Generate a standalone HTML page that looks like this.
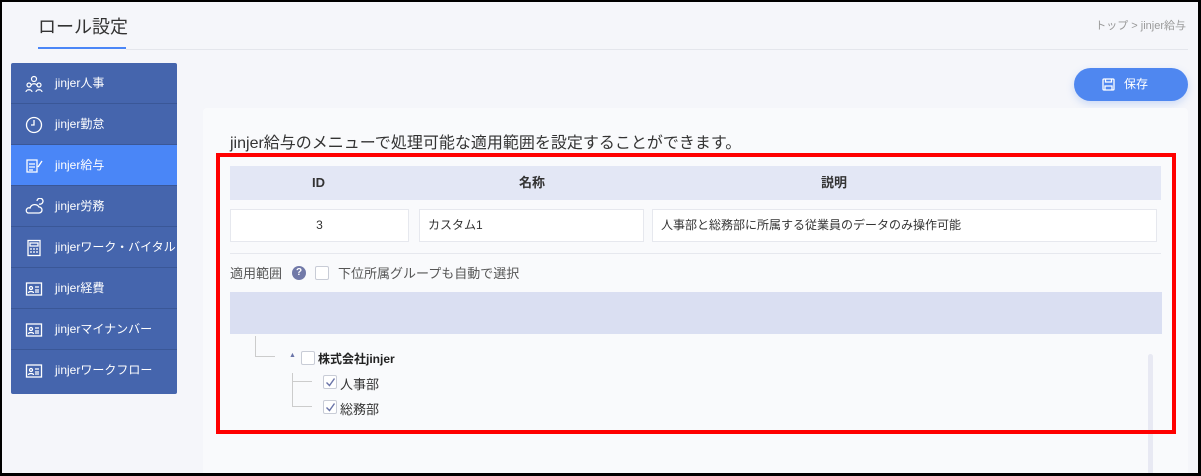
<!DOCTYPE html>
<html><head><meta charset="utf-8"><style>
*{box-sizing:border-box;margin:0;padding:0}
body{width:1201px;height:476px;overflow:hidden;background:#000;font-family:"Liberation Sans","Noto Sans CJK JP",sans-serif;color:#333}
#f{position:absolute;left:2px;top:2px;width:1196px;height:471px;background:#f5f6fa;overflow:hidden}
.a{position:absolute}
.side{left:9px;top:61px;width:166px;height:331px;background:#4565ad;border-radius:2px}
.it{position:absolute;left:0;width:166px;height:41px;border-bottom:1px solid #3a5797;color:#fff;font-size:12px;line-height:41px;padding-left:44px;white-space:nowrap}
.it svg{position:absolute;left:14px;top:12px}
.act{background:#4a86f7}
.cell{position:absolute;top:207px;height:33px;background:#fff;border:1px solid #e6e8ee;font-size:12px;line-height:31px}
.cb{position:absolute;width:14px;height:14px;border:1px solid #c8ccd6;background:#fff;border-radius:2px}
.ck{position:absolute;left:1px;top:1px}
</style></head><body><div id="f">
<div class="a" style="left:36px;top:11px;font-size:18px;color:#333">ロール設定</div>
<div class="a" style="left:36px;top:45px;width:88px;height:2px;background:#4a86f7"></div>
<div class="a" style="left:124px;top:47px;width:1062px;height:1px;background:#e4e6ec"></div>
<div class="a" style="right:12px;top:15px;font-size:11px;color:#999">トップ &gt; jinjer給与</div>
<div class="a side">
<div class="it" style="top:0"><svg width="18" height="18" viewBox="0 0 18 18" fill="none" stroke="#fff" stroke-width="1.2"><circle cx="9" cy="4" r="2.5"/><circle cx="4" cy="10" r="2"/><circle cx="14" cy="10" r="2"/><path d="M1 17c0-3 6-3 6 0M11 17c0-3 6-3 6 0M6 11c0-3 6-3 6 0"/></svg>jinjer人事</div>
<div class="it" style="top:41px"><svg width="18" height="18" viewBox="0 0 18 18" fill="none" stroke="#fff" stroke-width="1.3"><circle cx="9" cy="9" r="7.5"/><path d="M9 4v5H6"/></svg>jinjer勤怠</div>
<div class="it act" style="top:82px"><svg width="18" height="18" viewBox="0 0 18 18" fill="none" stroke="#fff" stroke-width="1.3"><path d="M2 3h10v12H2zM4 7h6M4 10h6M4 13h4M13 10l4-6"/></svg>jinjer給与</div>
<div class="it" style="top:123px"><svg width="20" height="18" viewBox="0 0 20 18" fill="none" stroke="#fff" stroke-width="1.3"><path d="M3 15h11a3 3 0 0 0 0-6 5 5 0 0 0-9 1 2.5 2.5 0 0 0-2 5zM14 6a3 3 0 1 0-2-3"/></svg>jinjer労務</div>
<div class="it" style="top:164px"><svg width="18" height="18" viewBox="0 0 18 18" fill="none" stroke="#fff" stroke-width="1.3"><rect x="3" y="1.5" width="12" height="15"/><path d="M5 4h8v3H5zM5 10h2M8 10h2M11 10h2M5 13h2M8 13h2M11 13h2"/></svg>jinjerワーク・バイタル</div>
<div class="it" style="top:205px"><svg width="18" height="18" viewBox="0 0 18 18" fill="none" stroke="#fff" stroke-width="1.3"><rect x="1.5" y="3" width="15" height="12"/><circle cx="6" cy="8" r="1.5"/><path d="M3.5 13c0-2 5-2 5 0M10 7h4M10 10h4M10 12h4"/></svg>jinjer経費</div>
<div class="it" style="top:246px"><svg width="18" height="18" viewBox="0 0 18 18" fill="none" stroke="#fff" stroke-width="1.3"><rect x="1.5" y="3" width="15" height="12"/><circle cx="6" cy="8" r="1.5"/><path d="M3.5 13c0-2 5-2 5 0M10 7h4M10 10h4M10 12h4"/></svg>jinjerマイナンバー</div>
<div class="it" style="top:287px;border:0"><svg width="18" height="18" viewBox="0 0 18 18" fill="none" stroke="#fff" stroke-width="1.3"><rect x="1.5" y="3" width="15" height="12"/><circle cx="6" cy="8" r="1.5"/><path d="M3.5 13c0-2 5-2 5 0M10 7h4M10 10h4M10 12h4"/></svg>jinjerワークフロー</div>
</div>
<div class="a" style="left:1072px;top:66px;width:114px;height:33px;border-radius:17px;background:#4f87f0;box-shadow:0 3px 8px rgba(79,135,240,.25);color:#fff;font-size:12px;line-height:33px;padding-left:50px">保存
<svg class="a" style="left:28px;top:10px" width="13" height="13" viewBox="0 0 13 13" fill="none" stroke="#fff" stroke-width="1.3"><rect x="1" y="1" width="11" height="11" rx="1"/><path d="M3.5 1v3h6V1M3 12V8h7v4"/></svg></div>
<div class="a" style="left:201px;top:106px;width:985px;height:370px;background:#f9fafc;border-radius:4px"></div>
<div class="a" style="left:228px;top:127px;font-size:16px;color:#333">jinjer給与のメニューで処理可能な適用範囲を設定することができます。</div>
<div class="a" style="left:228px;top:164px;width:931px;height:34px;background:#e3e7f5;font-size:13px;font-weight:bold;line-height:34px">
<span class="a" style="left:82px">ID</span><span class="a" style="left:289px">名称</span><span class="a" style="left:591px">説明</span></div>
<div class="cell" style="left:228px;width:179px;text-align:center">3</div>
<div class="cell" style="left:417px;width:225px;padding-left:8px">カスタム1</div>
<div class="cell" style="left:650px;width:505px;padding-left:8px">人事部と総務部に所属する従業員のデータのみ操作可能</div>
<div class="a" style="left:228px;top:251px;width:931px;height:1px;background:#e6e8ee"></div>
<div class="a" style="left:228px;top:261px;font-size:13px;color:#555">適用範囲</div>
<div class="a" style="left:290px;top:264px;width:14px;height:14px;border-radius:50%;background:#7179a8;color:#fff;font-size:10px;font-weight:bold;text-align:center;line-height:14px">?</div>
<div class="cb" style="left:313px;top:264px"></div>
<div class="a" style="left:336px;top:261px;font-size:13px;color:#555">下位所属グループも自動で選択</div>
<div class="a" style="left:228px;top:290px;width:932px;height:42px;background:#dadff2"></div>
<div class="a" style="left:253px;top:334px;width:1px;height:20px;background:#ccc"></div>
<div class="a" style="left:253px;top:354px;width:20px;height:1px;background:#ccc"></div>
<div class="a" style="left:287px;top:350px;font-size:7px;color:#6a74a8">▲</div>
<div class="cb" style="left:299px;top:349px"></div>
<div class="a" style="left:316px;top:348px;font-size:12px;font-weight:bold;color:#222">株式会社jinjer</div>
<div class="a" style="left:290px;top:371px;width:1px;height:33px;background:#ccc"></div>
<div class="a" style="left:290px;top:379px;width:20px;height:1px;background:#ccc"></div>
<div class="a" style="left:290px;top:404px;width:20px;height:1px;background:#ccc"></div>
<div class="cb" style="left:321px;top:373px"><svg class="ck" width="11" height="11" viewBox="0 0 11 11" fill="none" stroke="#6a74a8" stroke-width="1.4"><path d="M1.5 5.5l3 3 5-7"/></svg></div>
<div class="a" style="left:338px;top:372px;font-size:13px">人事部</div>
<div class="cb" style="left:321px;top:398px"><svg class="ck" width="11" height="11" viewBox="0 0 11 11" fill="none" stroke="#6a74a8" stroke-width="1.4"><path d="M1.5 5.5l3 3 5-7"/></svg></div>
<div class="a" style="left:338px;top:397px;font-size:13px">総務部</div>
<div class="a" style="left:1146px;top:352px;width:5px;height:124px;background:#e8e9f3;border-radius:3px"></div>
<div class="a" style="left:214px;top:151px;width:960px;height:281px;border:4px solid #f00"></div>
</div></body></html>
